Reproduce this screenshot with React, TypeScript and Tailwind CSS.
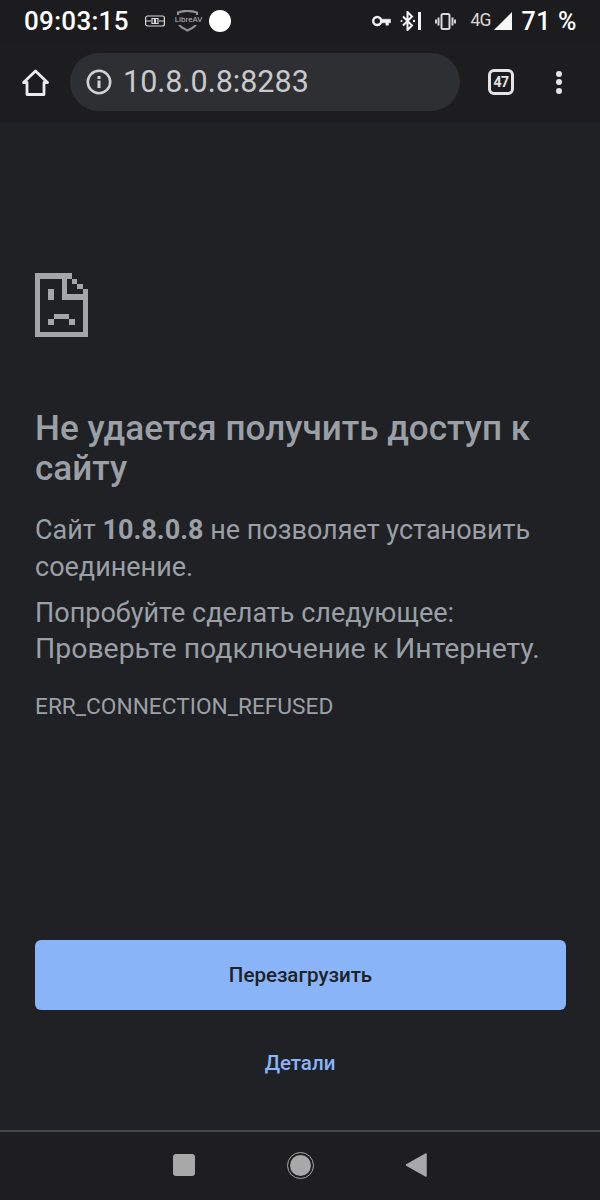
import { useMemo } from 'react';

const ROBOTO = 'font-["Roboto",sans-serif]';

// Sad page icon, drawn on a 10x12 pixel grid
function SadPage() {
  const cells = useMemo(
    () => [
      [0, 0, 1, 12],
      [0, 0, 7, 1],
      [0, 11, 10, 1],
      [9, 3, 1, 9],
      [5, 0, 1, 5],
      [5, 4, 5, 1],
      [7, 1, 1, 1],
      [8, 2, 1, 1],
      [2.5, 3, 1, 2],
      [3.5, 7.7, 3, 1],
      [2.5, 8.7, 1, 1],
      [6.5, 8.7, 1, 1],
    ],
    []
  );
  return (
    <svg width="53" height="64" viewBox="0 0 10 12" fill="#a5a6a8" shapeRendering="crispEdges">
      {cells.map(([x, y, w, h], i) => (
        <rect key={i} x={x} y={y} width={w} height={h} />
      ))}
    </svg>
  );
}

function StatusBar() {
  return (
    <div className="flex h-[42px] items-center bg-[#1c1c1e] pr-[23px] pl-6 text-white">
      <span className="text-[26px] leading-none font-medium tracking-[0.3px]">09:03:15</span>
      {/* usb-like notification */}
      <svg className="ml-[16px]" width="20" height="12" viewBox="0 0 20 12" fill="none" stroke="#d8d8d8" strokeWidth="1.2">
        <rect x="0.6" y="1" width="18.8" height="10" rx="2" />
        <path d="M1 6h5M14 6h5" />
        <path d="M7 3.5h2.5v5H7zM10.5 3.5H13v5h-2.5z" />
      </svg>
      {/* LibreAV shield */}
      <div className="relative ml-[11px] h-[22px] w-[23px]">
        <svg width="23" height="22" viewBox="0 0 23 22" fill="none">
          <path d="M2 2.500c6-2 13-2 19 0v9c0 4-5 7-9.500 9C7 18.500 2 15.500 2 11.500z" stroke="#8f8f8f" strokeWidth="2.200" />
        </svg>
        <span className="absolute top-[5px] left-[-1px] w-[25px] bg-[#1c1c1e] text-center text-[8px] leading-[10px] text-[#bdbdbd]">
          LibreAV
        </span>
      </div>
      <div className="ml-[10px] h-[22px] w-[22px] rounded-full bg-white" />

      <div className="ml-auto flex items-center">
        {/* vpn key */}
        <svg width="19" height="12" viewBox="0 0 19 12" fill="none" stroke="#f4f4f4" strokeWidth="2.400">
          <circle cx="5.200" cy="6" r="4" />
          <path d="M9 4.200h9.500v3.600h-2v2.400h-2.600V7.800H9" fill="#f4f4f4" strokeWidth="0.500" />
        </svg>
        {/* bluetooth connected */}
        <svg className="ml-[9px]" width="21" height="20" viewBox="0 0 21 20" fill="none" stroke="#f4f4f4" strokeWidth="2">
          <path d="M3 5.500l9 9-4.500 4.500V1l4.500 4.500-9 9" />
          <circle cx="1.500" cy="10" r="1" fill="#f4f4f4" stroke="none" />
          <circle cx="14" cy="10" r="1.200" fill="#f4f4f4" stroke="none" />
          <path d="M19.500 1v18" strokeWidth="3" />
        </svg>
        {/* vibrate */}
        <svg className="ml-[14px]" width="21" height="17" viewBox="0 0 21 17" fill="none" stroke="#d8d8d8" strokeWidth="2">
          <rect x="6.500" y="1" width="8" height="15" rx="1.500" />
          <path d="M3.500 4.500v8M0.900 6.500v4M17.500 4.500v8M20.100 6.500v4" />
        </svg>
        <span className="ml-[14px] text-[17.500px] leading-none tracking-[-0.8px] text-[#d8d8d8]">4G</span>
        <svg className="ml-[3px]" width="18" height="18" viewBox="0 0 18 18" fill="#f8f8f8">
          <path d="M18 0v18H0z" />
        </svg>
        <span className="ml-[10px] text-[25px] leading-none font-medium tracking-[0.6px]">71 %</span>
      </div>
    </div>
  );
}

function Toolbar() {
  return (
    <div className="flex h-[80px] items-center bg-[#1d1d1f]">
      <svg className="ml-[22px]" width="27" height="27" viewBox="0 0 27 27" fill="none" stroke="#ececec" strokeWidth="2.800" strokeLinejoin="round">
        <path d="M1.500 13.500L13.500 2l12 11.500h-3.500v12h-17v-12z" />
      </svg>
      <div className="ml-[21px] flex h-[58px] w-[390px] items-center rounded-[29px] bg-[#2e2f32] pl-[16px]">
        <svg width="26" height="26" viewBox="0 0 26 26" fill="none">
          <circle cx="13" cy="13" r="11.200" stroke="#d0d1d2" strokeWidth="2.600" />
          <rect x="11.500" y="11.500" width="3" height="7.500" fill="#d0d1d2" />
          <rect x="11.500" y="7" width="3" height="3" fill="#d0d1d2" />
        </svg>
        <span className="ml-[11px] text-[30.500px] leading-none text-[#c8c9cb]">10.8.0.8:8283</span>
      </div>
      <div className="ml-[28px] flex h-[26px] w-[26px] items-center justify-center rounded-[6px] border-[3px] border-[#e4e4e4]">
        <span className="text-[14px] leading-none font-bold tracking-[-0.5px] text-[#e4e4e4]">47</span>
      </div>
      <div className="ml-[42px] flex flex-col gap-[2.500px]">
        <div className="h-[6px] w-[6px] rounded-full bg-[#e4e4e4]" />
        <div className="h-[6px] w-[6px] rounded-full bg-[#e4e4e4]" />
        <div className="h-[6px] w-[6px] rounded-full bg-[#e4e4e4]" />
      </div>
    </div>
  );
}

function NavBar() {
  return (
    <div className="flex h-[70px] items-center justify-center border-t-2 border-[#47484a] bg-[#1e1e20] pb-[2px]">
      <div className="h-[22px] w-[22px] rounded-[3px] bg-[#a8a8a8]" />
      <div className="ml-[92px] flex h-[27px] w-[27px] items-center justify-center rounded-full border-[1.500px] border-[#a8a8a8]">
        <div className="h-[21px] w-[21px] rounded-full bg-[#a8a8a8]" />
      </div>
      <svg className="ml-[91px]" width="22" height="24" viewBox="0 0 22 24" fill="#a8a8a8" stroke="#a8a8a8" strokeWidth="1.500" strokeLinejoin="round">
        <path d="M1.500 12L21 1v22z" />
      </svg>
    </div>
  );
}

export default function App() {
  return (
    <div className={`flex h-[1200px] w-[600px] flex-col overflow-hidden bg-[#202124] ${ROBOTO}`}>
      <StatusBar />
      <Toolbar />
      <main className="flex flex-1 flex-col px-[35px] pt-[151px]">
        <SadPage />
        <h1 className="mt-[71px] text-[35.100px] leading-[40px] font-medium text-[#9aa0a6]">
          Не удается получить доступ к сайту
        </h1>
        <p className="mt-[24px] text-[27px] leading-[37px] text-[#9aa0a6]">
          Сайт <b className="font-bold">10.8.0.8</b> не позволяет установить соединение.
        </p>
        <div className="mt-[9px] text-[#9aa0a6]">
          <p className="text-[27px] leading-[37px]">Попробуйте сделать следующее:</p>
          <p className="text-[28.400px] leading-[34px]">Проверьте подключение к Интернету.</p>
        </div>
        <p className="mt-[27px] text-[22.700px] leading-[28px] text-[#9aa0a6]">ERR_CONNECTION_REFUSED</p>
        <button className="mt-auto h-[70px] w-[531px] rounded-[6px] bg-[#8ab4f8] text-[20.500px] font-medium text-[#202124]">
          Перезагрузить
        </button>
        <a className="mt-[39px] mb-[53px] text-center text-[20.500px] leading-[28px] font-medium text-[#8ab4f8]">Детали</a>
      </main>
      <NavBar />
    </div>
  );
}
